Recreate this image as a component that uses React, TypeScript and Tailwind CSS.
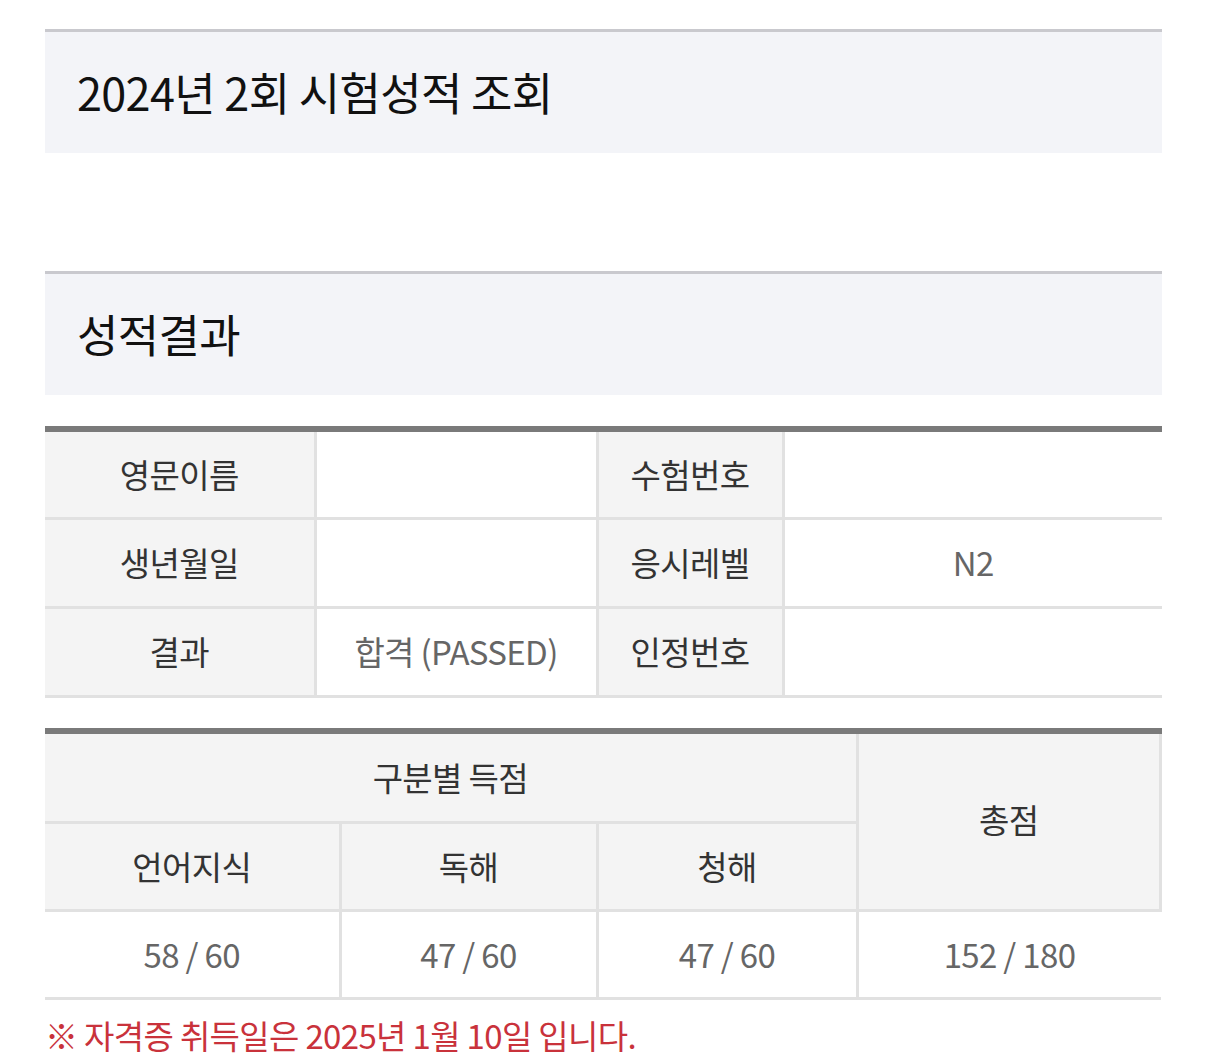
import React from 'react';

const font = { fontFamily: '"Noto Sans CJK KR", "Noto Sans", sans-serif' };

const SectionHeader: React.FC<{ title: string }> = ({ title }) => (
  <div className="border-t-[3px] border-[#c9c9ce] bg-[#f3f4f8] h-[124px] flex items-center pl-[32px] pb-[2px]">
    <h2 className="text-[45px] leading-none text-[#111] tracking-[-0.015em]">{title}</h2>
  </div>
);

const th = 'bg-[#f4f4f4] border-[3px] border-[#e1e1e1] text-[#333] font-normal';
const td = 'bg-white border-[3px] border-[#e1e1e1] text-[#666]';

export default function App() {
  const info = [
    { l1: '영문이름', v1: '', l2: '수험번호', v2: '' },
    { l1: '생년월일', v1: '', l2: '응시레벨', v2: 'N2' },
    { l1: '결과', v1: '합격 (PASSED)', l2: '인정번호', v2: '' },
  ];

  return (
    <div className="min-h-screen bg-white" style={font}>
      <div className="w-[1117px] ml-[45px] pt-[29px] pb-[2px]">
        <SectionHeader title="2024년 2회 시험성적 조회" />

        <div className="h-[118px]" />
        <SectionHeader title="성적결과" />

        {/* 기본 정보 */}
        <table className="w-full mt-[31px] border-collapse border-t-[6px] border-t-[#7a7a7a] border-x-0 text-[33px] tracking-[-0.02em] text-center">
          <colgroup>
            <col className="w-[270px]" />
            <col className="w-[282px]" />
            <col className="w-[186px]" />
            <col />
          </colgroup>
          <tbody>
            {info.map((r) => (
              <tr key={r.l1} className="h-[89px]">
                <th className={`${th} border-l-0`}>{r.l1}</th>
                <td className={td}>{r.v1}</td>
                <th className={th}>{r.l2}</th>
                <td className={`${td} border-r-0`}>{r.v2}</td>
              </tr>
            ))}
          </tbody>
        </table>

        {/* 점수 */}
        <table className="w-full mt-[30px] border-collapse border-t-[6px] border-t-[#7a7a7a] text-[33px] tracking-[-0.02em] text-center">
          <colgroup>
            <col className="w-[295px]" />
            <col className="w-[257px]" />
            <col className="w-[260px]" />
            <col />
          </colgroup>
          <tbody>
            <tr className="h-[92px]">
              <th colSpan={3} className={`${th} border-l-0`}>구분별 득점</th>
              <th rowSpan={2} className={`${th} pb-[4px]`}>총점</th>
            </tr>
            <tr className="h-[88px]">
              <th className={`${th} border-l-0`}>언어지식</th>
              <th className={th}>독해</th>
              <th className={th}>청해</th>
            </tr>
            <tr className="h-[88px]">
              <td className={`${td} border-l-0`}>58 / 60</td>
              <td className={td}>47 / 60</td>
              <td className={td}>47 / 60</td>
              <td className={`${td} border-r-0`}>152 / 180</td>
            </tr>
          </tbody>
        </table>

        <p className="mt-[15px] text-[33px] leading-[40px] text-[#c9323b] tracking-[-0.02em]">
          ※ 자격증 취득일은 2025년 1월 10일 입니다.
        </p>
      </div>
    </div>
  );
}
